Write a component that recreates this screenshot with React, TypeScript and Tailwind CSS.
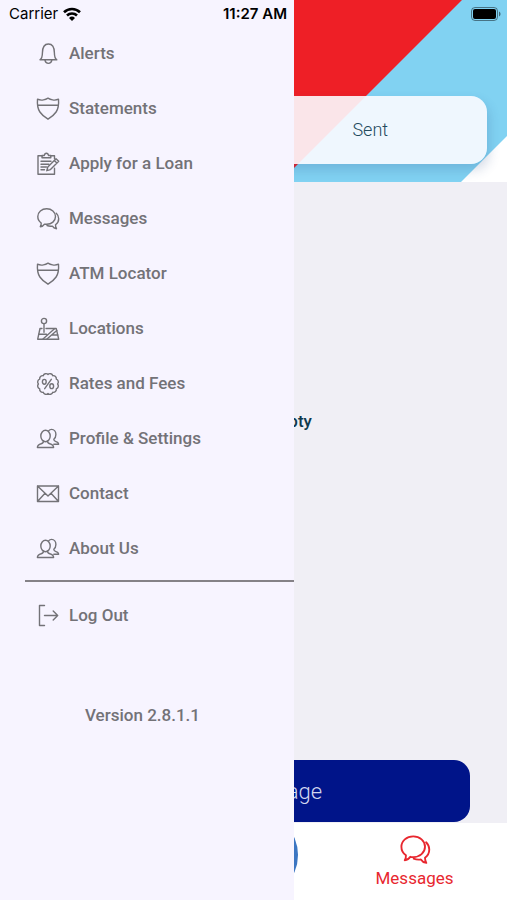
import type { ReactNode } from "react";

function Icon({ children, className = "size-6" }: { children: ReactNode; className?: string }) {
  return (
    <svg
      viewBox="0 0 24 24"
      fill="none"
      stroke="currentColor"
      strokeWidth="1.4"
      strokeLinejoin="round"
      strokeLinecap="round"
      className={`shrink-0 ${className}`}
      aria-hidden="true"
    >
      {children}
    </svg>
  );
}

const bell = (
  <Icon>
    <path d="M4 17.800c1.900-1.400 2.400-3.200 2.400-6.800C6.400 5.500 8.600 2 12.400 2s6 3.500 6 9c0 3.600.5 5.400 2.400 6.800z" />
    <path d="M9 18.200c.3 1.900 1.600 3.200 3.400 3.200s3.100-1.300 3.400-3.200" />
  </Icon>
);

const shield = (
  <Icon>
    <path d="M1.500 2.200c2.200 1 3.900 1.100 5.900.7C9.300 2.600 10.700 2 12 1.200c1.300.8 2.700 1.400 4.600 1.700 2 .4 3.700.3 5.900-.7.4 4.800-.1 9.300-2.400 12.800-2 3-4.900 5.200-8.100 7.200-3.200-2-6.100-4.200-8.100-7.200C1.600 11.500 1.100 7 1.500 2.200z" />
    <path d="M1.700 8.200h20.600" />
  </Icon>
);

const clipboard = (
  <Icon>
    <path d="M6.500 3.700H2v18.600h16.500v-6M14.500 3.700h4v3" />
    <path d="M6 5.800V3.500h2.300C8.500 2 9.300 1.200 10.400 1.200s1.900.8 2.100 2.300h2.300v2.300z" />
    <path d="M5 9.300h10M5 12.200h8M5 15h5.500M5 17.800h3.500" />
    <path d="M10.800 18.700l1-3.700 8.200-8.300 2.700 2.500-8.200 8.400zM18.300 8.500l2.600 2.500" />
  </Icon>
);

const chatShapes = (
  <>
    <path d="M10.700 1.800C5.700 1.800 1.800 5.200 1.800 9.600c0 2.800 1.300 5 3.400 6.400.1 1.500-.2 2.500-.9 3.700 1.900-.2 3.300-1.100 4.200-2.600.7.200 1.400.2 2.200.2 4.900 0 8.800-3.300 8.800-7.700s-3.900-7.800-8.800-7.800z" />
    <path d="M20.300 6.200c1.500 1.400 2.400 3.300 2.400 5.500 0 2.600-1.200 4.700-3.200 6.100 0 1.500.2 2.600 1 3.900-1.900-.3-3.200-1.100-4.100-2.600-1.900.3-3.700.1-5.400-.6" />
  </>
);

const chat = <Icon>{chatShapes}</Icon>;

const mapPin = (
  <Icon>
    <circle cx="8" cy="4" r="2.600" />
    <path d="M8 6.600v8.700M6 11.500H4L1.700 22.200h21L20.200 11.500H10" />
    <path d="M2.800 17.200h7.700M7 22L18.500 11.700M11 22l9.800-8.500M15.500 18h6.200" />
  </Icon>
);

const percent = (
  <Icon>
    <path d="M21.600 12a3 3 0 0 1-1.300 4.800a3 3 0 0 1-3.500 3.500a3 3 0 0 1-4.800 1.300a3 3 0 0 1-4.800-1.300a3 3 0 0 1-3.500-3.500a3 3 0 0 1-1.300-4.800a3 3 0 0 1 1.300-4.800a3 3 0 0 1 3.500-3.500a3 3 0 0 1 4.800-1.300a3 3 0 0 1 4.800 1.300a3 3 0 0 1 3.500 3.500a3 3 0 0 1 1.300 4.800z" />
    <path d="M15.300 7.300L8.700 16.700" />
    <ellipse cx="8.300" cy="9.800" rx="1.900" ry="2.400" />
    <ellipse cx="15.700" cy="14.200" rx="1.900" ry="2.400" />
  </Icon>
);

const people = (
  <Icon>
    <ellipse cx="9.500" cy="9" rx="4.700" ry="5.700" />
    <path d="M7.500 14c0 1.600-.7 2.300-2.300 2.700-2.400.6-3.800 1.500-3.800 3.800h16.200c0-2.300-1.400-3.200-3.800-3.800-1.600-.4-2.300-1.100-2.300-2.700" />
    <path d="M12.600 3.900c.8-1 1.800-1.500 3-1.500 2.600 0 4.300 2.300 4.300 5.200 0 2.200-.8 3.700-2.100 4.700 0 1.300.7 1.900 2.100 2.300 1.700.5 2.700 1.200 2.700 2.600h-4.800" />
  </Icon>
);

const envelope = (
  <Icon>
    <path d="M1.500 4h21v15.500h-21zM1.500 4L12 14 22.500 4M1.500 19.500L9 11.300M22.500 19.500L15 11.300" />
  </Icon>
);

const logOut = (
  <Icon>
    <path d="M8.500 1.500h-5v20h5M8.500 11.500h13M17.200 7l4.500 4.500-4.500 4.500" />
  </Icon>
);

const menu: { label: string; icon: ReactNode }[] = [
  { label: "Alerts", icon: bell },
  { label: "Statements", icon: shield },
  { label: "Apply for a Loan", icon: clipboard },
  { label: "Messages", icon: chat },
  { label: "ATM Locator", icon: shield },
  { label: "Locations", icon: mapPin },
  { label: "Rates and Fees", icon: percent },
  { label: "Profile & Settings", icon: people },
  { label: "Contact", icon: envelope },
  { label: "About Us", icon: people },
];

function MenuLink({ label, icon }: { label: string; icon: ReactNode }) {
  return (
    <a href="#" className="flex h-[55px] items-center gap-[9px] pl-9 text-[17px] font-medium">
      {icon}
      {label}
    </a>
  );
}

function StatusBar() {
  return (
    <div className="absolute inset-x-0 top-0 z-20 grid h-7 grid-cols-3 items-center pr-[6px] pl-[9px] font-[Inter,sans-serif] text-[15px] text-black">
      <div className="flex items-center gap-[5px]">
        Carrier
        <svg viewBox="0 0 18 14" className="h-[14px] w-[18px]" fill="none" stroke="currentColor" strokeWidth="2.600" aria-hidden="true">
          <path d="M1 5.200a11.500 11.500 0 0 1 16 0M4 8.500a7.200 7.200 0 0 1 10 0" />
          <path d="M6 11a4.300 4.300 0 0 1 6 0l-3 3z" fill="currentColor" stroke="none" />
        </svg>
      </div>
      <div className="text-center font-semibold whitespace-nowrap">11:27 AM</div>
      <svg viewBox="0 0 30 14" className="h-[14px] w-[30px] justify-self-end" aria-hidden="true">
        <rect x="0.500" y="0.500" width="26" height="13" rx="3.500" fill="none" stroke="#000" strokeOpacity="0.450" />
        <rect x="2" y="2" width="23" height="10" rx="2" fill="#000" />
        <path d="M28 4.500v5c1-.5 1.500-1.300 1.500-2.500s-.5-2-1.500-2.500z" fill="#000" fillOpacity="0.500" />
      </svg>
    </div>
  );
}

export default function App() {
  return (
    <div className="relative flex min-h-screen flex-col overflow-hidden bg-[#f0eff5] font-[Roboto,sans-serif]">
      <StatusBar />

      <header className="relative h-[182px] overflow-hidden px-5 pt-24">
        <svg
          viewBox="0 0 507 182"
          preserveAspectRatio="xMaxYMin slice"
          className="absolute inset-0 size-full"
          aria-hidden="true"
        >
          <path d="M0 0h507v182H0z" fill="#81d2f2" />
          <path d="M0 0h462L280 182H0z" fill="#ee1f26" />
          <path d="M507 136v46h-46z" fill="#fff" />
        </svg>
        <div className="relative grid h-[68px] grid-cols-2 rounded-2xl bg-[#fbfbff]/90 text-lg font-light text-[#234a5d] shadow-[2px_6px_12px_rgba(40,70,130,0.2)]">
          <button type="button">Inbox</button>
          <button type="button">Sent</button>
        </div>
      </header>

      <main className="flex flex-1 flex-col">
        <p className="flex flex-1 items-center justify-center pb-[98px] text-[17px] font-medium text-[#103a4d]">
          Folder is empty
        </p>
        <button
          type="button"
          className="mx-[37px] mb-px h-[62px] rounded-2xl bg-[#001489] text-[22px] font-light text-[#d3d6ee]"
        >
          New Message
        </button>
      </main>

      <nav className="grid h-[77px] grid-cols-3 items-center bg-white px-3 text-[17px] leading-6 text-[#e8272f]">
        <a href="#" className="text-center">Accounts</a>
        <a
          href="#"
          aria-label="Home"
          className="-mt-[26px] -mb-3 size-[88px] justify-self-center rounded-full bg-[#3c76c2]"
        />
        <a href="#" className="flex flex-col items-center">
          <Icon className="size-8">{chatShapes}</Icon>
          Messages
        </a>
      </nav>

      <aside className="absolute inset-y-0 left-0 z-10 w-[294px] bg-[#f7f4ff] pt-[26px] text-[#737277]">
        <nav>
          {menu.map((item) => (
            <MenuLink key={item.label} label={item.label} icon={item.icon} />
          ))}
          <hr className="mt-1 mb-[6px] ml-[25px] border-t-2 border-[#858287]" />
          <MenuLink label="Log Out" icon={logOut} />
        </nav>
        <p className="mt-[60px] pl-[85px] text-[17px] font-medium">Version 2.8.1.1</p>
      </aside>
    </div>
  );
}
